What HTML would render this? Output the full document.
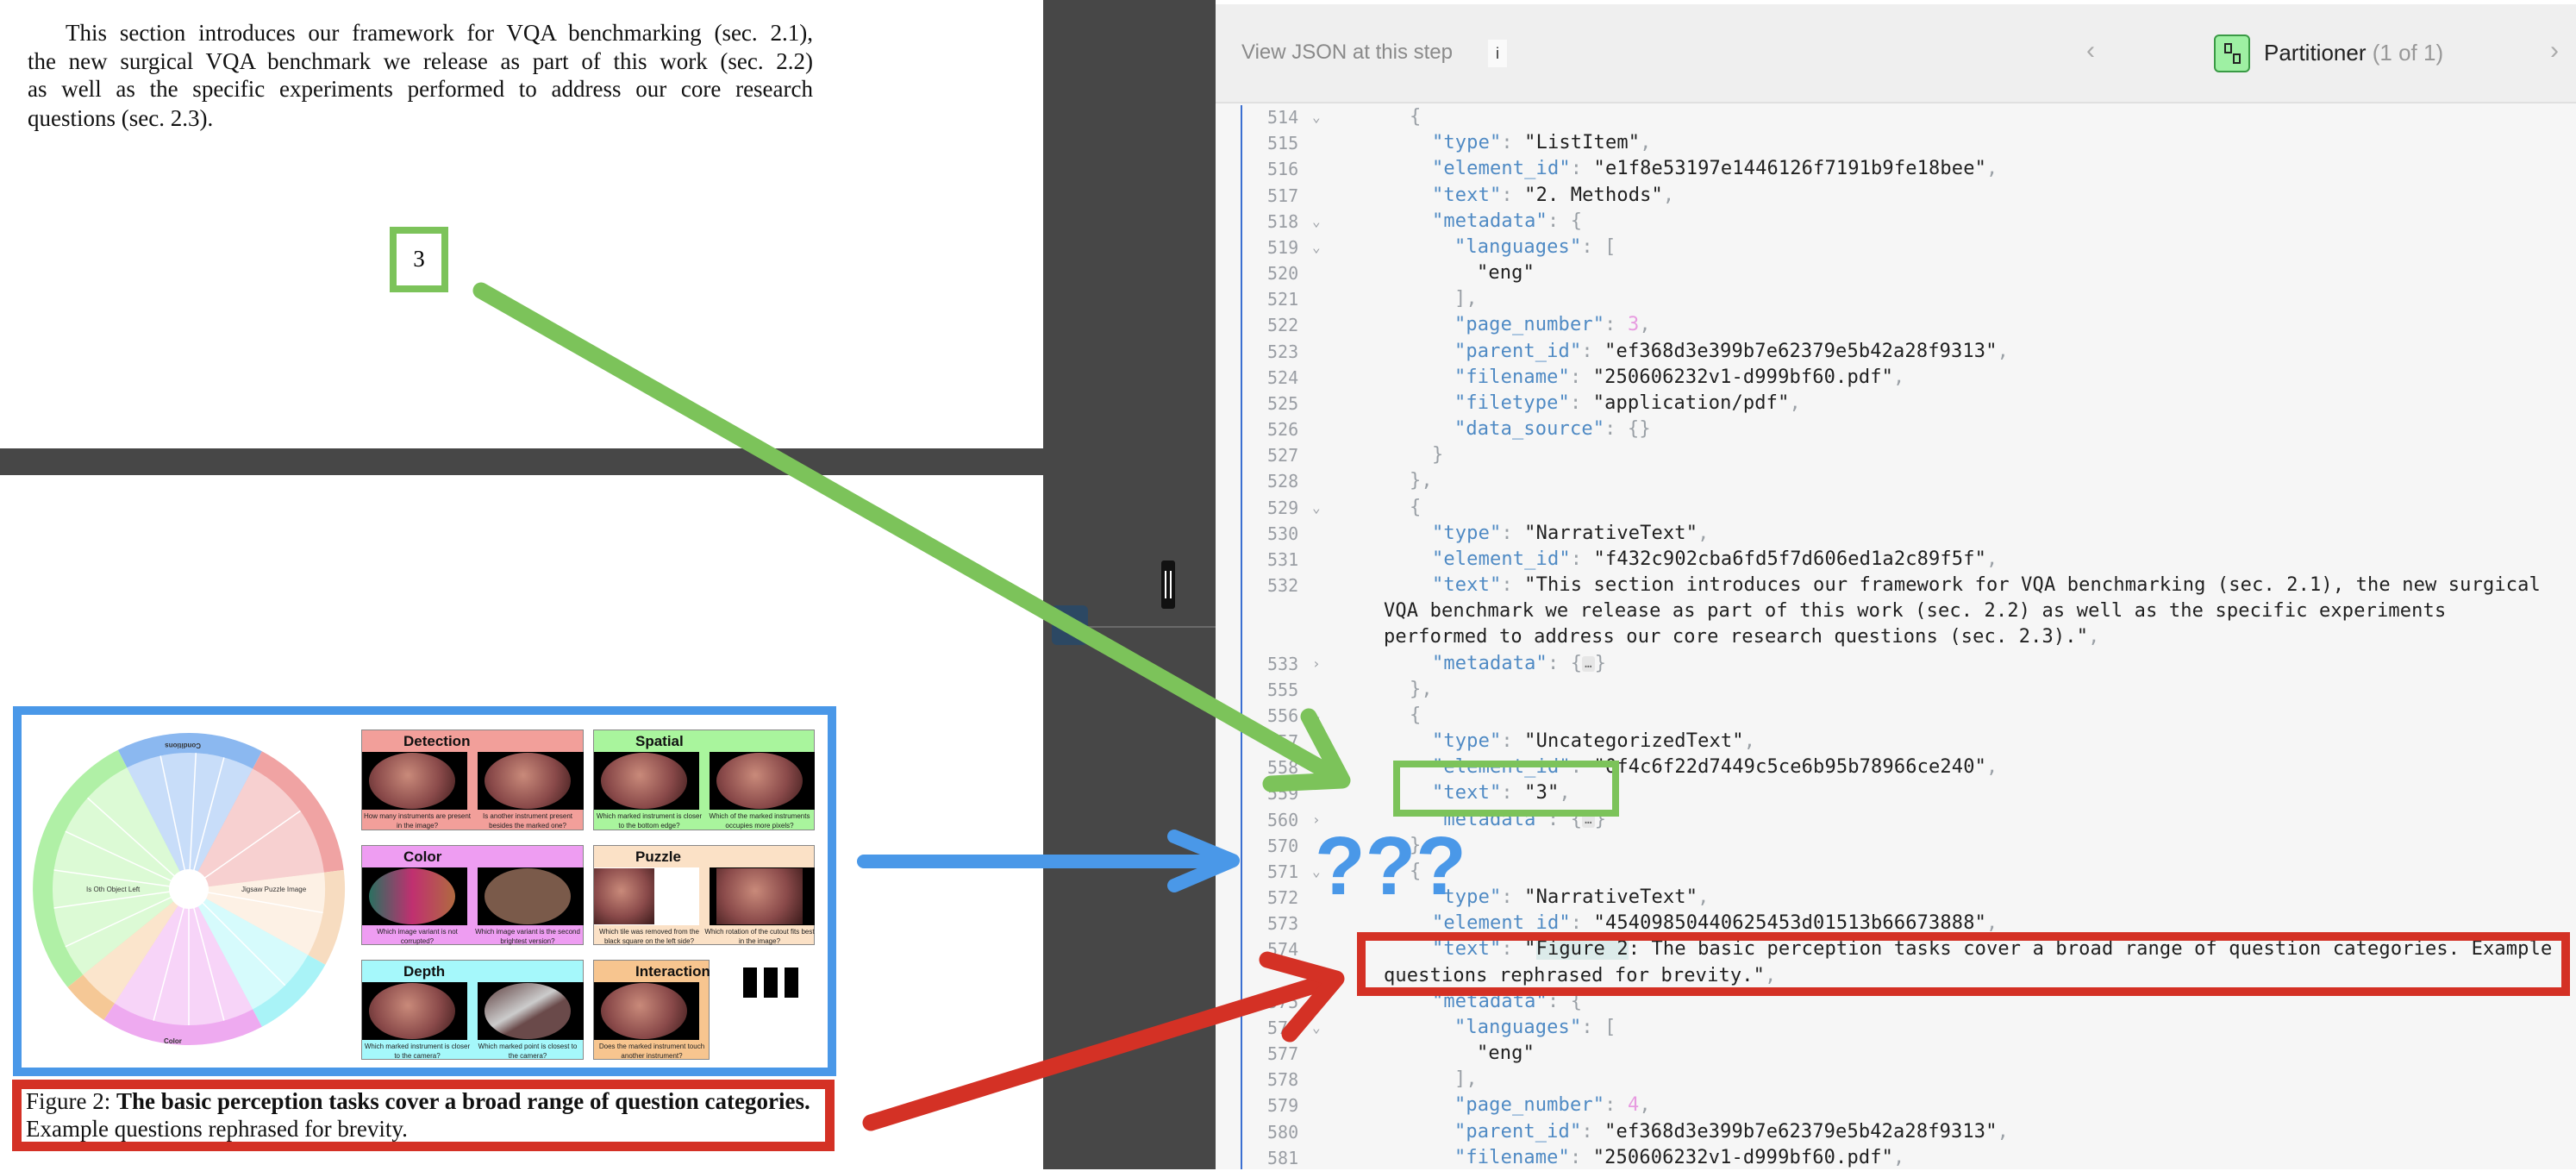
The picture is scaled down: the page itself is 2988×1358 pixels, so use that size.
<!DOCTYPE html>
<html><head><meta charset="utf-8">
<style>
*{margin:0;padding:0;box-sizing:border-box}
body{width:2988px;height:1356px;position:relative;overflow:hidden;background:#fff;font-family:"Liberation Sans",sans-serif}
.abs{position:absolute}
.pdf{font-family:"Liberation Serif",serif;font-size:27px;color:#111}
.pl{position:absolute;left:32px;width:911px;text-align:justify;text-align-last:justify;white-space:nowrap;height:32px;line-height:32px}
.code{font-family:"DejaVu Sans Mono",monospace;font-size:22px;color:#1f1f1f;letter-spacing:0.15px}
.r{position:absolute;height:30px;line-height:30px;white-space:pre}
.n{position:absolute;left:1470px;color:#9a9ea4;height:30px;line-height:30px;font-size:20px;letter-spacing:0}
.ch{position:absolute;left:1522px;color:#9a9ea4;font-size:16px;height:30px;line-height:30px}
.k{color:#4f8ac4}.p{color:#9aa0a6}.num{color:#e79be0}
.L0{left:1635px}.L1{left:1661px}.L2{left:1687px}.L3{left:1713px}.W{left:1605px}
.el{display:inline-block;background:#e6e6e6;border-radius:3px;color:#666;font-size:14px;line-height:18px;padding:0 3px;vertical-align:middle}
.pan{position:absolute;border:1px solid #888}
.ph{position:absolute;left:0;top:0;right:0;height:25px;font-weight:bold;font-size:17px;line-height:25px;padding-left:48px;color:#111}
.im{position:absolute;top:25px;height:67px;background:#000;overflow:hidden}
.im i{position:absolute;left:8px;top:1px;width:100px;height:65px;border-radius:50%;background:radial-gradient(circle at 45% 40%,#c98a7a,#8a4a4a 55%,#3a1a1a)}
.pc{position:absolute;top:92px;height:25px;font-size:8px;line-height:11px;text-align:center;color:#222;padding-top:2px}
</style></head><body>

<div class="pdf">
<div class="pl" style="top:22px;left:76px;width:867px">This section introduces our framework for VQA benchmarking (sec. 2.1),</div>
<div class="pl" style="top:55px">the new surgical VQA benchmark we release as part of this work (sec. 2.2)</div>
<div class="pl" style="top:87px">as well as the specific experiments performed to address our core research</div>
<div class="pl" style="top:121px;text-align-last:left">questions (sec. 2.3).</div>
</div>
<div class="abs" style="left:452px;top:263px;width:68px;height:76px;border:8px solid #7cc35a;font-family:'Liberation Serif',serif;font-size:27px;text-align:center;line-height:58px">3</div>

<div class="abs" style="left:1210px;top:0;width:200px;height:1356px;background:#474747"></div>
<div class="abs" style="left:0;top:520px;width:1210px;height:31px;background:#474747"></div>
<div class="abs" style="left:1220px;top:702px;width:42px;height:46px;background:#2c4863;border-radius:6px"></div>
<div class="abs" style="left:1262px;top:726px;width:148px;height:2px;background:#6a6a6a"></div>
<div class="abs" style="left:1347px;top:650px;width:16px;height:56px;background:#111;border-radius:3px"></div>
<div class="abs" style="left:1351px;top:662px;width:2px;height:32px;background:#fff"></div>
<div class="abs" style="left:1357px;top:662px;width:2px;height:32px;background:#fff"></div>

<div class="abs" style="left:1410px;top:0;width:1578px;height:1356px;background:#f6f6f6"></div>
<div class="abs" style="left:1410px;top:0;width:1578px;height:5px;background:#fff"></div>
<div class="abs" style="left:1410px;top:5px;width:1578px;height:115px;background:#efefef;border-bottom:2px solid #e0e0e0"></div>
<div class="abs" style="left:1440px;top:47px;font-size:24px;color:#8a8a8a">View JSON at this step</div>
<div class="abs" style="left:1726px;top:46px;width:22px;height:32px;background:#fafafa;font-size:18px;line-height:32px;text-align:center;color:#333">i</div>
<div class="abs" style="left:2420px;top:42px;font-size:30px;color:#aaa">‹</div>
<div class="abs" style="left:2568px;top:40px;width:42px;height:44px;background:#9ef0a3;border:2px solid #3a9a45;border-radius:6px">
<div class="abs" style="left:10px;top:8px;width:9px;height:12px;border:2px solid #222"></div>
<div class="abs" style="left:20px;top:20px;width:9px;height:12px;border:2px solid #222"></div>
</div>
<div class="abs" style="left:2626px;top:46px;font-size:26px;color:#222">Partitioner <span style="color:#999">(1 of 1)</span></div>
<div class="abs" style="left:2958px;top:42px;font-size:30px;color:#aaa">›</div>
<div class="abs" style="left:1439px;top:122px;width:2px;height:1234px;background:#3b6fd1"></div>

<div class="code">
<div class="n" style="top:121px">514</div><div class="ch" style="top:121px">⌄</div><div class="r L0" style="top:121px"><span class="p">{</span></div>
<div class="n" style="top:151px">515</div><div class="r L1" style="top:151px"><span class="k">"type"</span><span class="p">: </span>"ListItem"<span class="p">,</span></div>
<div class="n" style="top:181px">516</div><div class="r L1" style="top:181px"><span class="k">"element_id"</span><span class="p">: </span>"e1f8e53197e1446126f7191b9fe18bee"<span class="p">,</span></div>
<div class="n" style="top:212px">517</div><div class="r L1" style="top:212px"><span class="k">"text"</span><span class="p">: </span>"2. Methods"<span class="p">,</span></div>
<div class="n" style="top:242px">518</div><div class="ch" style="top:242px">⌄</div><div class="r L1" style="top:242px"><span class="k">"metadata"</span><span class="p">: {</span></div>
<div class="n" style="top:272px">519</div><div class="ch" style="top:272px">⌄</div><div class="r L2" style="top:272px"><span class="k">"languages"</span><span class="p">: [</span></div>
<div class="n" style="top:302px">520</div><div class="r L3" style="top:302px">"eng"</div>
<div class="n" style="top:332px">521</div><div class="r L2" style="top:332px"><span class="p">],</span></div>
<div class="n" style="top:362px">522</div><div class="r L2" style="top:362px"><span class="k">"page_number"</span><span class="p">: </span><span class="num">3</span><span class="p">,</span></div>
<div class="n" style="top:393px">523</div><div class="r L2" style="top:393px"><span class="k">"parent_id"</span><span class="p">: </span>"ef368d3e399b7e62379e5b42a28f9313"<span class="p">,</span></div>
<div class="n" style="top:423px">524</div><div class="r L2" style="top:423px"><span class="k">"filename"</span><span class="p">: </span>"250606232v1-d999bf60.pdf"<span class="p">,</span></div>
<div class="n" style="top:453px">525</div><div class="r L2" style="top:453px"><span class="k">"filetype"</span><span class="p">: </span>"application/pdf"<span class="p">,</span></div>
<div class="n" style="top:483px">526</div><div class="r L2" style="top:483px"><span class="k">"data_source"</span><span class="p">: {}</span></div>
<div class="n" style="top:513px">527</div><div class="r L1" style="top:513px"><span class="p">}</span></div>
<div class="n" style="top:543px">528</div><div class="r L0" style="top:543px"><span class="p">},</span></div>
<div class="n" style="top:574px">529</div><div class="ch" style="top:574px">⌄</div><div class="r L0" style="top:574px"><span class="p">{</span></div>
<div class="n" style="top:604px">530</div><div class="r L1" style="top:604px"><span class="k">"type"</span><span class="p">: </span>"NarrativeText"<span class="p">,</span></div>
<div class="n" style="top:634px">531</div><div class="r L1" style="top:634px"><span class="k">"element_id"</span><span class="p">: </span>"f432c902cba6fd5f7d606ed1a2c89f5f"<span class="p">,</span></div>
<div class="n" style="top:664px">532</div><div class="r L1" style="top:664px"><span class="k">"text"</span><span class="p">: </span>"This section introduces our framework for VQA benchmarking (sec. 2.1), the new surgical</div>
<div class="r W" style="top:694px">VQA benchmark we release as part of this work (sec. 2.2) as well as the specific experiments</div>
<div class="r W" style="top:724px">performed to address our core research questions (sec. 2.3)."<span class="p">,</span></div>
<div class="n" style="top:755px">533</div><div class="ch" style="top:755px">›</div><div class="r L1" style="top:755px"><span class="k">"metadata"</span><span class="p">: {</span><span class="el">…</span><span class="p">}</span></div>
<div class="n" style="top:785px">555</div><div class="r L0" style="top:785px"><span class="p">},</span></div>
<div class="n" style="top:815px">556</div><div class="ch" style="top:815px">⌄</div><div class="r L0" style="top:815px"><span class="p">{</span></div>
<div class="n" style="top:845px">557</div><div class="r L1" style="top:845px"><span class="k">"type"</span><span class="p">: </span>"UncategorizedText"<span class="p">,</span></div>
<div class="n" style="top:875px">558</div><div class="r L1" style="top:875px"><span class="k">"element_id"</span><span class="p">: </span>"0f4c6f22d7449c5ce6b95b78966ce240"<span class="p">,</span></div>
<div class="n" style="top:905px">559</div><div class="r L1" style="top:905px"><span class="k">"text"</span><span class="p">: </span>"3"<span class="p">,</span></div>
<div class="n" style="top:936px">560</div><div class="ch" style="top:936px">›</div><div class="r L1" style="top:936px"><span class="k">"metadata"</span><span class="p">: {</span><span class="el">…</span><span class="p">}</span></div>
<div class="n" style="top:966px">570</div><div class="r L0" style="top:966px"><span class="p">},</span></div>
<div class="n" style="top:996px">571</div><div class="ch" style="top:996px">⌄</div><div class="r L0" style="top:996px"><span class="p">{</span></div>
<div class="n" style="top:1026px">572</div><div class="r L1" style="top:1026px"><span class="k">"type"</span><span class="p">: </span>"NarrativeText"<span class="p">,</span></div>
<div class="n" style="top:1056px">573</div><div class="r L1" style="top:1056px"><span class="k">"element_id"</span><span class="p">: </span>"45409850440625453d01513b66673888"<span class="p">,</span></div>
<div class="n" style="top:1086px">574</div><div class="r L1" style="top:1086px"><span class="k">"text"</span><span class="p">: </span>"<span style="background:#dcebea">Figure 2</span>: The basic perception tasks cover a broad range of question categories. Example</div>
<div class="r W" style="top:1117px">questions rephrased for brevity."<span class="p">,</span></div>
<div class="n" style="top:1147px">575</div><div class="ch" style="top:1147px">⌄</div><div class="r L1" style="top:1147px"><span class="k">"metadata"</span><span class="p">: {</span></div>
<div class="n" style="top:1177px">576</div><div class="ch" style="top:1177px">⌄</div><div class="r L2" style="top:1177px"><span class="k">"languages"</span><span class="p">: [</span></div>
<div class="n" style="top:1207px">577</div><div class="r L3" style="top:1207px">"eng"</div>
<div class="n" style="top:1237px">578</div><div class="r L2" style="top:1237px"><span class="p">],</span></div>
<div class="n" style="top:1267px">579</div><div class="r L2" style="top:1267px"><span class="k">"page_number"</span><span class="p">: </span><span class="num">4</span><span class="p">,</span></div>
<div class="n" style="top:1298px">580</div><div class="r L2" style="top:1298px"><span class="k">"parent_id"</span><span class="p">: </span>"ef368d3e399b7e62379e5b42a28f9313"<span class="p">,</span></div>
<div class="n" style="top:1328px">581</div><div class="r L2" style="top:1328px"><span class="k">"filename"</span><span class="p">: </span>"250606232v1-d999bf60.pdf"<span class="p">,</span></div>
</div>

<div class="pan" style="left:419px;top:846px;width:258px;height:117px;background:#f29f9a">
 <div class="ph">Detection</div><div class="im" style="left:0;width:122px"><i></i></div><div class="im" style="left:134px;width:123px"><i></i></div>
 <div class="pc" style="left:0;width:128px">How many instruments are present in the image?</div><div class="pc" style="left:128px;width:128px">Is another instrument present besides the marked one?</div></div>
<div class="pan" style="left:688px;top:846px;width:257px;height:117px;background:#a9f59d">
 <div class="ph">Spatial</div><div class="im" style="left:0;width:122px"><i></i></div><div class="im" style="left:134px;width:122px"><i></i></div>
 <div class="pc" style="left:0;width:128px">Which marked instrument is closer to the bottom edge?</div><div class="pc" style="left:128px;width:128px">Which of the marked instruments occupies more pixels?</div></div>
<div class="pan" style="left:419px;top:980px;width:258px;height:116px;background:#ee9df2">
 <div class="ph">Color</div><div class="im" style="left:0;width:122px"><i style="background:linear-gradient(90deg,#2a7060,#c03070 50%,#b06a40)"></i></div><div class="im" style="left:134px;width:123px"><i style="background:#7a5a4a"></i></div>
 <div class="pc" style="left:0;width:128px">Which image variant is not corrupted?</div><div class="pc" style="left:128px;width:128px">Which image variant is the second brightest version?</div></div>
<div class="pan" style="left:688px;top:980px;width:257px;height:116px;background:#fbe1c6">
 <div class="ph">Puzzle</div><div class="im" style="left:0;width:122px;background:#fff"><i style="border-radius:0;width:70px;left:0"></i></div><div class="im" style="left:134px;width:122px"><i style="border-radius:0"></i></div>
 <div class="pc" style="left:0;width:128px">Which tile was removed from the black square on the left side?</div><div class="pc" style="left:128px;width:128px">Which rotation of the cutout fits best in the image?</div></div>
<div class="pan" style="left:419px;top:1113px;width:258px;height:116px;background:#a5f8fb">
 <div class="ph">Depth</div><div class="im" style="left:0;width:122px"><i></i></div><div class="im" style="left:134px;width:123px"><i style="background:linear-gradient(150deg,#5a3a3a,#ccc 45%,#6a4a4a 60%)"></i></div>
 <div class="pc" style="left:0;width:128px">Which marked instrument is closer to the camera?</div><div class="pc" style="left:128px;width:128px">Which marked point is closest to the camera?</div></div>
<div class="pan" style="left:688px;top:1113px;width:135px;height:116px;background:#f7c58f">
 <div class="ph">Interaction</div><div class="im" style="left:0;width:122px"><i></i></div>
 <div class="pc" style="left:0;width:134px">Does the marked instrument touch another instrument?</div></div>
<div class="abs" style="left:862px;top:1122px;width:16px;height:35px;background:#000"></div>
<div class="abs" style="left:886px;top:1122px;width:16px;height:35px;background:#000"></div>
<div class="abs" style="left:910px;top:1122px;width:16px;height:35px;background:#000"></div>

<div class="pdf abs" style="left:30px;top:1261px;font-size:27px;line-height:32px;white-space:nowrap">Figure 2: <b>The basic perception tasks cover a broad range of question categories.</b><br>Example questions rephrased for brevity.</div>

<svg class="abs" style="left:0;top:0" width="2988" height="1356" viewBox="0 0 2988 1356">
 <g>
  <path d="M219 1031 L136.8 869.7 A181 181 0 0 1 303.9 871.2Z" fill="#8bb8f0"/>
  <path d="M219 1031 L303.9 871.2 A181 181 0 0 1 398.7 1008.9Z" fill="#f0a3a3"/>
  <path d="M219 1031 L398.7 1008.9 A181 181 0 0 1 377.4 1118.8Z" fill="#f7dcc0"/>
  <path d="M219 1031 L377.4 1118.8 A181 181 0 0 1 303.9 1190.8Z" fill="#a9f3f7"/>
  <path d="M219 1031 L303.9 1190.8 A181 181 0 0 1 120.4 1182.9Z" fill="#eeaaf0"/>
  <path d="M219 1031 L120.4 1182.9 A181 181 0 0 1 78.4 1144.8Z" fill="#f5c896"/>
  <path d="M219 1031 L78.4 1144.8 A181 181 0 0 1 136.8 869.7Z" fill="#b0f0a6"/>
  <path d="M219 1031 L147.3 890.2 A158 158 0 0 1 293.1 891.5Z" fill="#c8ddf9"/>
  <path d="M219 1031 L293.1 891.5 A158 158 0 0 1 375.9 1011.7Z" fill="#f7d0d0"/>
  <path d="M219 1031 L375.9 1011.7 A158 158 0 0 1 357.3 1107.6Z" fill="#fdf1e5"/>
  <path d="M219 1031 L357.3 1107.6 A158 158 0 0 1 293.1 1170.5Z" fill="#d6fbfc"/>
  <path d="M219 1031 L293.1 1170.5 A158 158 0 0 1 132.9 1163.6Z" fill="#f7d4f8"/>
  <path d="M219 1031 L132.9 1163.6 A158 158 0 0 1 96.2 1130.4Z" fill="#fbe5cc"/>
  <path d="M219 1031 L96.2 1130.4 A158 158 0 0 1 147.3 890.2Z" fill="#dcfad5"/>
  <g stroke="#fff" stroke-width="1.5">
   <line x1="219" y1="1031" x2="219" y2="873" transform="rotate(-12 219 1031)"/>
   <line x1="219" y1="1031" x2="219" y2="873" transform="rotate(3 219 1031)"/>
   <line x1="219" y1="1031" x2="219" y2="873" transform="rotate(15 219 1031)"/>
   <line x1="219" y1="1031" x2="219" y2="873" transform="rotate(55 219 1031)"/>
   <line x1="219" y1="1031" x2="219" y2="873" transform="rotate(100 219 1031)"/>
   <line x1="219" y1="1031" x2="219" y2="873" transform="rotate(135 219 1031)"/>
   <line x1="219" y1="1031" x2="219" y2="873" transform="rotate(165 219 1031)"/>
   <line x1="219" y1="1031" x2="219" y2="873" transform="rotate(180 219 1031)"/>
   <line x1="219" y1="1031" x2="219" y2="873" transform="rotate(195 219 1031)"/>
   <line x1="219" y1="1031" x2="219" y2="873" transform="rotate(245 219 1031)"/>
   <line x1="219" y1="1031" x2="219" y2="873" transform="rotate(262 219 1031)"/>
   <line x1="219" y1="1031" x2="219" y2="873" transform="rotate(278 219 1031)"/>
   <line x1="219" y1="1031" x2="219" y2="873" transform="rotate(295 219 1031)"/>
   <line x1="219" y1="1031" x2="219" y2="873" transform="rotate(312 219 1031)"/>
  </g>
  <circle cx="219" cy="1031" r="23" fill="#fff"/>
  <g font-family="Liberation Sans" font-size="8" fill="#333">
   <text x="100" y="1034">Is Oth Object Left</text>
   <text x="280" y="1034">Jigsaw Puzzle Image</text>
   <text x="205" y="862" font-weight="bold" transform="rotate(180 219 862)">Conditions</text>
   <text x="190" y="1210" font-weight="bold">Color</text>
  </g>
 </g>
 <rect x="20" y="824" width="945" height="419" fill="none" stroke="#4a98e8" stroke-width="10"/>
 <rect x="19.5" y="1257.5" width="943" height="72" fill="none" stroke="#d43125" stroke-width="11"/>
 <rect x="1620" y="886" width="254" height="57" fill="none" stroke="#7cc35a" stroke-width="8"/>
 <rect x="1579" y="1086" width="1397" height="64" fill="none" stroke="#d43125" stroke-width="10"/>
 <g stroke-linecap="round" stroke-linejoin="round" fill="none">
  <line x1="558" y1="337" x2="1545" y2="898" stroke="#7cc35a" stroke-width="19"/>
  <polyline points="1518,831 1557,905 1474,909" stroke="#7cc35a" stroke-width="19"/>
  <line x1="1002" y1="999" x2="1425" y2="999" stroke="#4a98e8" stroke-width="16"/>
  <polyline points="1362,970 1430,998 1362,1027" stroke="#4a98e8" stroke-width="16"/>
  <line x1="1010" y1="1302" x2="1540" y2="1138" stroke="#d43125" stroke-width="19"/>
  <polyline points="1470,1113 1550,1135 1496,1199" stroke="#d43125" stroke-width="19"/>
 </g>
 <text x="1525" y="1037" font-family="Liberation Sans" font-weight="bold" font-size="96" fill="#4a98e8">???</text>
</svg>
</body></html>
